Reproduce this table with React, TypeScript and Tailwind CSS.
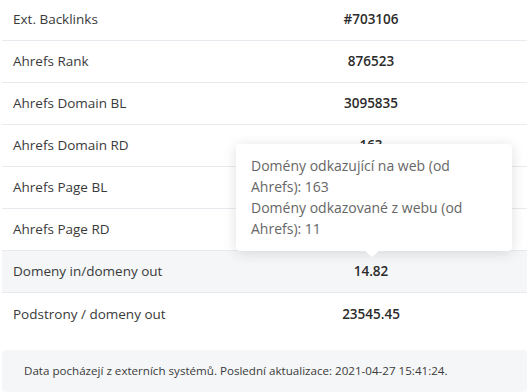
const rows = [
  { label: 'Ext. Backlinks', value: '#703106' },
  { label: 'Ahrefs Rank', value: '876523' },
  { label: 'Ahrefs Domain BL', value: '3095835' },
  { label: 'Ahrefs Domain RD', value: '163' },
  { label: 'Ahrefs Page BL', value: '' },
  { label: 'Ahrefs Page RD', value: '' },
  { label: 'Domeny in/domeny out', value: '14.82', active: true },
  { label: 'Podstrony / domeny out', value: '23545.45', last: true },
];

export default function App() {
  return (
    <div
      className="relative w-[529px] h-[392px] bg-white overflow-hidden text-[#333]"
      style={{ fontFamily: '"Open Sans", "Liberation Sans", sans-serif' }}
    >
      <div className="px-[2px] -mt-[1px]">
        {rows.map((r) => (
          <div
            key={r.label}
            className={
              'grid grid-cols-[213px_1fr] items-center h-[42px] text-[13.5px] ' +
              (r.last ? '' : 'border-b border-[#e9e9ef] ') +
              (r.active ? 'bg-[#f5f6f8]' : '')
            }
          >
            <div className="pl-[11px] text-[#3a3a3a]">{r.label}</div>
            <div className="text-center font-semibold text-[#2b2b2b]">{r.value}</div>
          </div>
        ))}
        <div className="mt-[15px] h-[42px] rounded-[4px] bg-[#f5f6f8] flex items-center pl-[22px] text-[11.6px] text-[#3a3a3a]">
          Data pocházejí z externích systémů. Poslední aktualizace: 2021-04-27 15:41:24.
        </div>
      </div>

      <div className="absolute left-[236px] top-[144px] w-[276px] h-[107px] bg-white rounded-[4px] shadow-[0_2px_14px_rgba(0,0,0,0.13)] px-[15px] py-[11px] text-[14px] leading-[21px] text-[#666]">
        <div>Domény odkazující na web (od Ahrefs): 163</div>
        <div>Domény odkazované z webu (od Ahrefs): 11</div>
        <div className="absolute left-[129px] bottom-[-6px] w-0 h-0 border-l-[7px] border-r-[7px] border-t-[6px] border-l-transparent border-r-transparent border-t-white" />
      </div>
    </div>
  );
}
